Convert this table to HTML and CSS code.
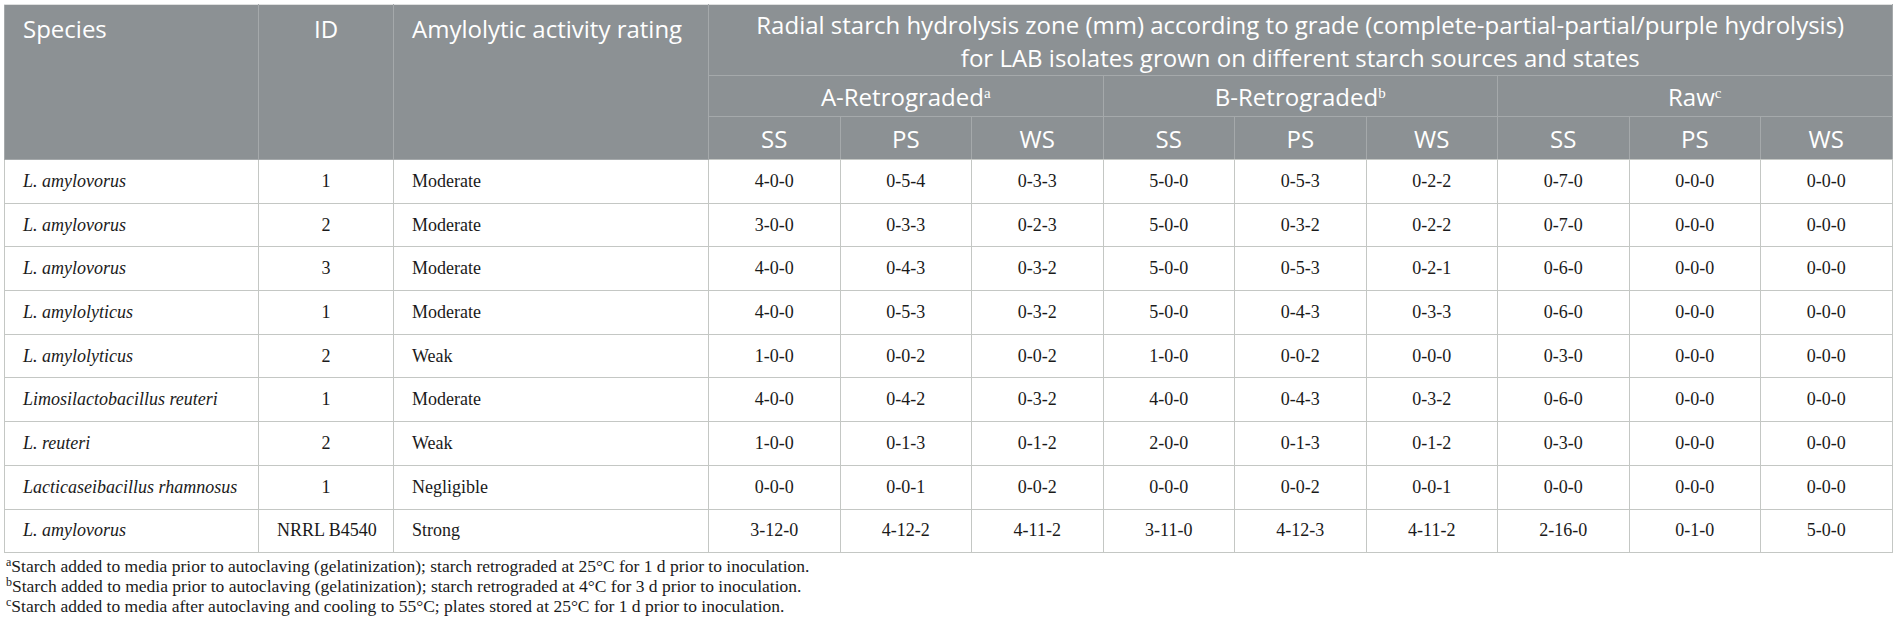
FILE: index.html
```html
<!DOCTYPE html>
<html lang="en">
<head>
<meta charset="utf-8">
<title>Radial starch hydrolysis zone</title>
<link rel="stylesheet" href="styles.css">
</head>
<body>
<table class="data-table">
  <colgroup>
    <col class="c-species">
    <col class="c-id">
    <col class="c-rating">
    <col class="c-val"><col class="c-val"><col class="c-val">
    <col class="c-val"><col class="c-val"><col class="c-val">
    <col class="c-val"><col class="c-val"><col class="c-val">
  </colgroup>
  <thead>
    <tr class="h-row1">
      <th rowspan="3" class="h-left">Species</th>
      <th rowspan="3" class="h-center">ID</th>
      <th rowspan="3" class="h-left">Amylolytic activity rating</th>
      <th colspan="9" class="h-title">Radial starch hydrolysis zone (mm) according to grade (complete-partial-partial/purple hydrolysis)<br>for LAB isolates grown on different starch sources and states</th>
    </tr>
    <tr class="h-row2">
      <th colspan="3">A-Retrograded<sup>a</sup></th>
      <th colspan="3">B-Retrograded<sup>b</sup></th>
      <th colspan="3">Raw<sup>c</sup></th>
    </tr>
    <tr class="h-row3">
      <th>SS</th><th>PS</th><th>WS</th>
      <th>SS</th><th>PS</th><th>WS</th>
      <th>SS</th><th>PS</th><th>WS</th>
    </tr>
  </thead>
  <tbody>
    <tr><td class="sp">L. amylovorus</td><td class="id">1</td><td class="rt">Moderate</td><td>4-0-0</td><td>0-5-4</td><td>0-3-3</td><td>5-0-0</td><td>0-5-3</td><td>0-2-2</td><td>0-7-0</td><td>0-0-0</td><td>0-0-0</td></tr>
    <tr><td class="sp">L. amylovorus</td><td class="id">2</td><td class="rt">Moderate</td><td>3-0-0</td><td>0-3-3</td><td>0-2-3</td><td>5-0-0</td><td>0-3-2</td><td>0-2-2</td><td>0-7-0</td><td>0-0-0</td><td>0-0-0</td></tr>
    <tr><td class="sp">L. amylovorus</td><td class="id">3</td><td class="rt">Moderate</td><td>4-0-0</td><td>0-4-3</td><td>0-3-2</td><td>5-0-0</td><td>0-5-3</td><td>0-2-1</td><td>0-6-0</td><td>0-0-0</td><td>0-0-0</td></tr>
    <tr><td class="sp">L. amylolyticus</td><td class="id">1</td><td class="rt">Moderate</td><td>4-0-0</td><td>0-5-3</td><td>0-3-2</td><td>5-0-0</td><td>0-4-3</td><td>0-3-3</td><td>0-6-0</td><td>0-0-0</td><td>0-0-0</td></tr>
    <tr><td class="sp">L. amylolyticus</td><td class="id">2</td><td class="rt">Weak</td><td>1-0-0</td><td>0-0-2</td><td>0-0-2</td><td>1-0-0</td><td>0-0-2</td><td>0-0-0</td><td>0-3-0</td><td>0-0-0</td><td>0-0-0</td></tr>
    <tr><td class="sp">Limosilactobacillus reuteri</td><td class="id">1</td><td class="rt">Moderate</td><td>4-0-0</td><td>0-4-2</td><td>0-3-2</td><td>4-0-0</td><td>0-4-3</td><td>0-3-2</td><td>0-6-0</td><td>0-0-0</td><td>0-0-0</td></tr>
    <tr><td class="sp">L. reuteri</td><td class="id">2</td><td class="rt">Weak</td><td>1-0-0</td><td>0-1-3</td><td>0-1-2</td><td>2-0-0</td><td>0-1-3</td><td>0-1-2</td><td>0-3-0</td><td>0-0-0</td><td>0-0-0</td></tr>
    <tr><td class="sp">Lacticaseibacillus rhamnosus</td><td class="id">1</td><td class="rt">Negligible</td><td>0-0-0</td><td>0-0-1</td><td>0-0-2</td><td>0-0-0</td><td>0-0-2</td><td>0-0-1</td><td>0-0-0</td><td>0-0-0</td><td>0-0-0</td></tr>
    <tr><td class="sp">L. amylovorus</td><td class="id">NRRL B4540</td><td class="rt">Strong</td><td>3-12-0</td><td>4-12-2</td><td>4-11-2</td><td>3-11-0</td><td>4-12-3</td><td>4-11-2</td><td>2-16-0</td><td>0-1-0</td><td>5-0-0</td></tr>
  </tbody>
</table>
<div class="notes">
  <p><sup>a</sup>Starch added to media prior to autoclaving (gelatinization); starch retrograded at 25°C for 1 d prior to inoculation.</p>
  <p><sup>b</sup>Starch added to media prior to autoclaving (gelatinization); starch retrograded at 4°C for 3 d prior to inoculation.</p>
  <p><sup>c</sup>Starch added to media after autoclaving and cooling to 55°C; plates stored at 25°C for 1 d prior to inoculation.</p>
</div>
</body>
</html>
```

FILE: styles.css
```css
html, body {
  margin: 0;
  padding: 0;
  background: #ffffff;
}
body {
  padding: 4px;
  font-family: "Liberation Serif", "Times New Roman", serif;
  color: #1a1a1a;
}
.data-table {
  width: 1888px;
  table-layout: fixed;
  border-collapse: collapse;
  border: 1px solid #c4c7c4;
}
.c-species { width: 254px; }
.c-id { width: 135px; }
.c-rating { width: 315px; }
.c-val { width: 131.5px; }

.data-table th {
  background: #8c9194;
  color: #ffffff;
  font-family: "Open Sans", "Noto Sans", sans-serif;
  font-weight: 400;
  font-size: 24px;
  line-height: 33px;
  border: 1px solid #a5a9ab;
  padding: 0 10px;
  text-align: center;
  vertical-align: middle;
}
.data-table thead tr.h-row1 th {
  border-top-color: #dfe0e0;
}
.data-table th.h-left {
  text-align: left;
  vertical-align: top;
  padding: 7px 18px 0;
}
.data-table th.h-center {
  vertical-align: top;
  padding-top: 7px;
}
.data-table th.h-title {
  height: 71px;
  padding: 2px 8px 0;
  box-sizing: border-box;
  white-space: nowrap;
}
.h-row2 th { height: 41px; box-sizing: border-box; }
.h-row3 th { height: 43px; box-sizing: border-box; }
.data-table th sup {
  font-family: "Liberation Serif", serif;
  font-size: 15px;
  vertical-align: 0;
  position: relative;
  top: -8px;
  line-height: 0;
}
.data-table thead tr:last-child th {
  border-bottom: 1px solid #c4c7c4;
}

.data-table td {
  height: 43.7px;
  box-sizing: border-box;
  border: 1px solid #c4c7c4;
  padding: 0 18px;
  font-size: 18px;
  text-align: center;
  vertical-align: middle;
  white-space: nowrap;
}
.data-table td.sp {
  text-align: left;
  font-style: italic;
}
.data-table td.rt {
  text-align: left;
}

.notes {
  margin-top: 4px;
  padding-left: 2px;
}
.notes p {
  margin: 0;
  font-size: 17.5px;
  line-height: 18px;
  color: #1a1a1a;
}
.notes sup {
  font-size: 12px;
  vertical-align: 0;
  position: relative;
  top: -6px;
}
```
